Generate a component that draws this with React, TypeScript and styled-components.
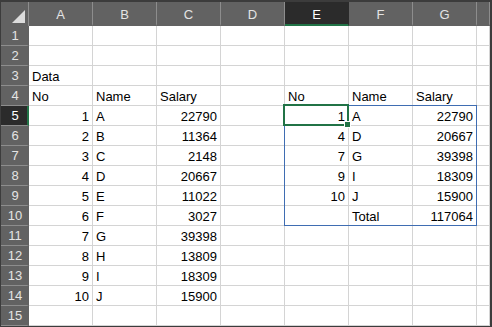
import React from "react";
import styled, { createGlobalStyle } from "styled-components";

const Global = createGlobalStyle`
  html, body {
    margin: 0;
    padding: 0;
    background: #ffffff;
  }
  * {
    box-sizing: border-box;
  }
`;

const Frame = styled.div`
  width: 492px;
  height: 327px;
  border-style: solid;
  border-color: #3c3c3c;
  border-width: 2px 2px 1px 1px;
  background: #ffffff;
  overflow: hidden;
  font-family: "Liberation Sans", Arial, sans-serif;
  font-size: 13px;
`;

const Sheet = styled.div`
  position: relative;
  display: grid;
  grid-template-columns: 28px repeat(7, 64px) 1fr;
  grid-template-rows: 24px repeat(15, 20px);
`;

const Corner = styled.div`
  position: relative;
  background: #626262;
  border-right: 1px solid #8d8d8d;

  &::after {
    content: "";
    position: absolute;
    right: 3px;
    bottom: 3px;
    width: 0;
    height: 0;
    border-style: solid;
    border-width: 0 0 13px 13px;
    border-color: transparent transparent #dcdcdc transparent;
  }
`;

const ColHead = styled.div<{ $active?: boolean }>`
  display: flex;
  align-items: center;
  justify-content: center;
  background: ${(p) => (p.$active ? "#2b2b2b" : "#626262")};
  color: ${(p) => (p.$active ? "#ffffff" : "#e4e4e4")};
  border-right: 1px solid ${(p) => (p.$active ? "#2b2b2b" : "#8d8d8d")};
  border-bottom: 2px solid ${(p) => (p.$active ? "#217346" : "#626262")};
  padding-top: 2px;
`;

const RowHead = styled.div<{ $active?: boolean }>`
  display: flex;
  align-items: center;
  justify-content: center;
  background: ${(p) => (p.$active ? "#2b2b2b" : "#626262")};
  color: ${(p) => (p.$active ? "#ffffff" : "#e4e4e4")};
  border-bottom: 1px solid #8d8d8d;
  border-right: 2px solid ${(p) => (p.$active ? "#217346" : "#626262")};
  padding-left: 2px;
`;

const Cell = styled.div<{ $num?: boolean }>`
  display: flex;
  align-items: flex-end;
  justify-content: ${(p) => (p.$num ? "flex-end" : "flex-start")};
  border-right: 1px solid #d4d4d4;
  border-bottom: 1px solid #d4d4d4;
  padding: 0 3px 1px 3px;
  line-height: 15px;
  color: #000000;
  white-space: nowrap;
  overflow: visible;
`;

const TableRange = styled.div`
  position: absolute;
  left: 283px;
  top: 103px;
  width: 193px;
  height: 121px;
  border: 1px solid #3f6db2;
  pointer-events: none;
`;

const Selection = styled.div`
  position: absolute;
  left: 282px;
  top: 102px;
  width: 66px;
  height: 22px;
  border: 2px solid #217346;
  pointer-events: none;
`;

const Handle = styled.div`
  position: absolute;
  left: 343px;
  top: 119px;
  width: 7px;
  height: 7px;
  background: #217346;
  border: 1px solid #ffffff;
`;

const columns = ["A", "B", "C", "D", "E", "F", "G", ""];

type Value = string | number | null;

const rows: Value[][] = [
  [null, null, null, null, null, null, null, null],
  [null, null, null, null, null, null, null, null],
  ["Data", null, null, null, null, null, null, null],
  ["No", "Name", "Salary", null, "No", "Name", "Salary", null],
  [1, "A", 22790, null, 1, "A", 22790, null],
  [2, "B", 11364, null, 4, "D", 20667, null],
  [3, "C", 2148, null, 7, "G", 39398, null],
  [4, "D", 20667, null, 9, "I", 18309, null],
  [5, "E", 11022, null, 10, "J", 15900, null],
  [6, "F", 3027, null, null, "Total", 117064, null],
  [7, "G", 39398, null, null, null, null, null],
  [8, "H", 13809, null, null, null, null, null],
  [9, "I", 18309, null, null, null, null, null],
  [10, "J", 15900, null, null, null, null, null],
  [null, null, null, null, null, null, null, null],
];

export default function App() {
  return (
    <>
      <Global />
      <Frame>
        <Sheet>
          <Corner />
          {columns.map((c, i) => (
            <ColHead key={"h" + i} $active={c === "E"}>
              {c}
            </ColHead>
          ))}
          {rows.map((row, r) => (
            <React.Fragment key={"r" + r}>
              <RowHead $active={r === 4}>{r + 1}</RowHead>
              {row.map((v, c) => (
                <Cell key={c} $num={typeof v === "number"}>
                  {v}
                </Cell>
              ))}
            </React.Fragment>
          ))}
          <TableRange />
          <Selection />
          <Handle />
        </Sheet>
      </Frame>
    </>
  );
}
